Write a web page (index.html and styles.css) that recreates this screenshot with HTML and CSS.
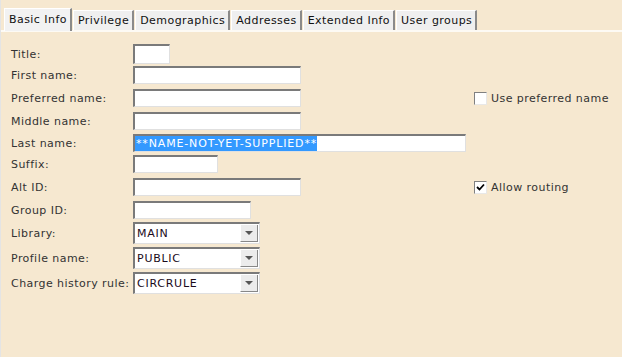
FILE: index.html
```html
<!DOCTYPE html>
<html>
<head>
<meta charset="utf-8">
<link rel="stylesheet" href="styles.css">
</head>
<body>
<div class="page">
  <div class="tabs">
    <div class="tab active">Basic Info</div>
    <div class="tab">Privilege</div>
    <div class="tab">Demographics</div>
    <div class="tab">Addresses</div>
    <div class="tab">Extended Info</div>
    <div class="tab">User groups</div>
  </div>
  <div class="panel">
    <div class="form">
      <div class="label r-title">Title:</div>
      <div class="field r-title"><div class="input w-title tall"></div></div>
      <div class="label">First name:</div>
      <div class="field"><div class="input w-name"></div></div>
      <div class="label">Preferred name:</div>
      <div class="field"><div class="input w-name"></div></div>
      <div class="check"><span class="box"></span>Use preferred name</div>
      <div class="label">Middle name:</div>
      <div class="field"><div class="input w-name"></div></div>
      <div class="label">Last name:</div>
      <div class="field"><div class="input w-last"><span class="sel">**NAME-NOT-YET-SUPPLIED**</span></div></div>
      <div class="label">Suffix:</div>
      <div class="field"><div class="input w-suffix"></div></div>
      <div class="label">Alt ID:</div>
      <div class="field"><div class="input w-name"></div></div>
      <div class="check"><span class="box"><svg width="9" height="9" viewBox="0 0 9 9"><path d="M1 4 L3.5 6.5 L8 1.5" fill="none" stroke="#000" stroke-width="1.8"/></svg></span>Allow routing</div>
      <div class="label">Group ID:</div>
      <div class="field"><div class="input w-group"></div></div>
      <div class="label sel-row">Library:</div>
      <div class="field sel-row"><div class="select"><span class="val">MAIN</span><span class="btn"><span class="tri"></span></span></div></div>
      <div class="label sel-row">Profile name:</div>
      <div class="field sel-row"><div class="select"><span class="val">PUBLIC</span><span class="btn"><span class="tri"></span></span></div></div>
      <div class="label sel-row">Charge history rule:</div>
      <div class="field sel-row"><div class="select"><span class="val">CIRCRULE</span><span class="btn"><span class="tri"></span></span></div></div>
    </div>
  </div>
</div>
</body>
</html>
```

FILE: styles.css
```css
html, body {
  margin: 0;
  padding: 0;
  width: 622px;
  height: 357px;
  overflow: hidden;
  background: #f6e8d0;
  font-family: Verdana, "DejaVu Sans", sans-serif;
  font-size: 11px;
  letter-spacing: 0.45px;
  color: #2b2b2b;
}
.page {
  height: 357px;
  border-left: 1px solid #e4e4e4;
  box-sizing: border-box;
}
.tabs {
  display: flex;
  align-items: flex-end;
  padding: 8px 0 0 3px;
  height: 22px;
  gap: 1px;
}
.tab {
  height: 19px;
  line-height: 19px;
  padding: 0 3px 0 4px;
  background: #efefef;
  border-right: 2px solid #8a8a8a;
  border-left: 1px solid #ffffff;
  border-top: 1px solid #ffffff;
  color: #111;
  white-space: nowrap;
}
.tab.active {
  height: 22px;
  line-height: 21px;
  background: #f2f2f2;
  margin-bottom: -1px;
  position: relative;
  z-index: 1;
}
.panel {
  border-top: 2px solid #fdfaf4;
  padding: 12px 0 0 10px;
}
.form {
  display: grid;
  grid-template-columns: 122px 341px auto;
  grid-template-rows: 22px 23px 23px 22px 21px 23px 23px 21px 25px 25px 25px;
}
.label {
  grid-column: 1;
  display: flex;
  align-items: center;
  height: 18px;
  color: #333;
}
.label.r-title { height: 20px; }
.field {
  grid-column: 2;
}
.check {
  grid-column: 3;
  display: flex;
  align-items: center;
  height: 18px;
  color: #333;
}
.box {
  width: 11px;
  height: 11px;
  border-top: 1px solid #808080;
  border-left: 1px solid #808080;
  border-right: 1px solid #e8e8e8;
  border-bottom: 1px solid #e8e8e8;
  background: #fff;
  margin-right: 4px;
  display: flex;
  align-items: center;
  justify-content: center;
}
.input {
  box-sizing: border-box;
  height: 18px;
  background: #fff;
  border-top: 2px solid #7a7a7a;
  border-left: 2px solid #7a7a7a;
  border-right: 1px solid #e0e0e0;
  border-bottom: 1px solid #e0e0e0;
  display: flex;
  align-items: center;
  overflow: hidden;
  white-space: nowrap;
}
.input.tall { height: 20px; }
.w-title { width: 37px; }
.w-name { width: 168px; }
.w-last { width: 333px; }
.w-suffix { width: 85px; }
.w-group { width: 118px; }
.sel {
  background: #3399ff;
  color: #fff;
  height: 15px;
  line-height: 15px;
  padding-left: 1px;
  letter-spacing: 0.85px;
}
.form .sel-row { height: 22px; }
.select {
  box-sizing: border-box;
  width: 127px;
  height: 22px;
  background: #fff;
  border-top: 2px solid #7a7a7a;
  border-left: 2px solid #7a7a7a;
  border-right: 1px solid #e0e0e0;
  border-bottom: 1px solid #e0e0e0;
  display: flex;
  align-items: stretch;
}
.select .val {
  flex: 1;
  display: flex;
  align-items: center;
  padding-left: 2px;
  color: #1a0a1a;
  letter-spacing: 0.75px;
}
.select .btn {
  width: 16px;
  background: #ececec;
  border-left: 1px solid #ffffff;
  border-right: 1px solid #888;
  border-bottom: 1px solid #888;
  margin: 1px 1px 1px 0;
  display: flex;
  align-items: center;
  justify-content: center;
}
.tri {
  width: 0;
  height: 0;
  border-left: 4px solid transparent;
  border-right: 4px solid transparent;
  border-top: 4px solid #555;
}
```
